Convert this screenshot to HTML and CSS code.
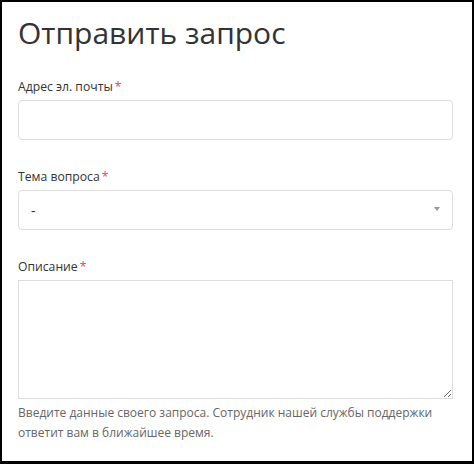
FILE: index.html
```html
<!DOCTYPE html>
<html lang="ru">
<head>
    <meta charset="UTF-8">
    <meta name="viewport" content="width=device-width, initial-scale=1.0">
    <title>Отправить запрос</title>
    <link rel="stylesheet" href="styles.css">
</head>
<body>
    <div class="frame">
        <h1 class="title">Отправить запрос</h1>
        <form class="request-form">
            <div class="field">
                <label class="field-label" for="email">Адрес эл. почты<span class="required">*</span></label>
                <input class="field-input" type="email" id="email">
            </div>
            <div class="field">
                <label class="field-label" for="subject">Тема вопроса<span class="required">*</span></label>
                <div class="select-box" id="subject">
                    <span class="select-value">-</span>
                    <span class="select-arrow"></span>
                </div>
            </div>
            <div class="field">
                <label class="field-label" for="description">Описание<span class="required">*</span></label>
                <textarea class="field-textarea" id="description"></textarea>
                <p class="hint">Введите данные своего запроса. Сотрудник нашей службы поддержки ответит вам в ближайшее время.</p>
            </div>
        </form>
    </div>
</body>
</html>
```

FILE: styles.css
```css
/* Reset some default styles */
* {
    box-sizing: border-box;
    margin: 0;
    padding: 0;
}

body {
    font-family: 'Open Sans', 'Noto Sans', sans-serif;
    background-color: #000;
    color: #333;
}

.frame {
    background-color: #fff;
    margin: 2px 2px 3px 2px;
    height: 459px;
    padding: 13px 19px 0 16px;
    overflow: hidden;
}

.title {
    font-size: 30px;
    font-weight: 400;
    line-height: 36px;
    color: #333;
    margin-bottom: 26px;
}

.field {
    margin-bottom: 27px;
}

.field-label {
    display: block;
    font-size: 12.2px;
    line-height: 20px;
    margin-bottom: 3px;
    color: #333;
}

.required {
    color: #e8474c;
    margin-left: 2px;
}

.field-input,
.select-box {
    display: block;
    width: 100%;
    height: 40px;
    border: 1px solid #ddd;
    border-radius: 4px;
    background-color: #fff;
    font-family: inherit;
    font-size: 14px;
}

.select-box {
    display: flex;
    align-items: center;
    justify-content: space-between;
    height: 40px;
    padding: 0 12px 0 12px;
}

.select-value {
    font-size: 14px;
    color: #333;
}

.select-arrow {
    width: 0;
    height: 0;
    border-left: 3px solid transparent;
    border-right: 3px solid transparent;
    border-top: 4px solid #999;
    margin-top: -2px;
}

.field-textarea {
    display: block;
    width: 100%;
    height: 119px;
    border: 1px solid #ddd;
    border-radius: 0;
    font-family: inherit;
    resize: vertical;
}

.hint {
    font-size: 12px;
    line-height: 20px;
    color: #666;
    margin-top: 4px;
}
```
